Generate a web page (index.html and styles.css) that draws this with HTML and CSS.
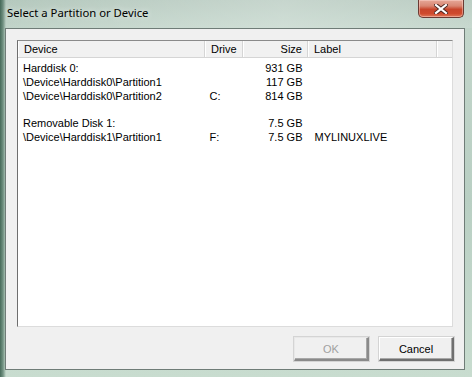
FILE: index.html
```html
<!DOCTYPE html>
<html lang="en">
<head>
  <meta charset="UTF-8">
  <title>Select a Partition or Device</title>
  <link rel="stylesheet" href="styles.css">
</head>
<body>

<div class="window">
  <div class="titlebar">
    <span class="title">Select a Partition or Device</span>
    <button class="close" title="Close">
      <svg width="14" height="10" viewBox="0 0 14 10">
        <path d="M2 1 L12 9 M12 1 L2 9" stroke="#4a2520" stroke-width="4" stroke-linecap="square" fill="none"/>
        <path d="M2 1 L12 9 M12 1 L2 9" stroke="#ffffff" stroke-width="2.2" stroke-linecap="square" fill="none"/>
      </svg>
    </button>
  </div>

  <div class="client">
    <div class="listview">
      <table class="devices">
        <thead>
          <tr>
            <th class="col-device">Device</th>
            <th class="col-drive">Drive</th>
            <th class="col-size">Size</th>
            <th class="col-label">Label</th>
            <th class="col-fill"></th>
          </tr>
        </thead>
        <tbody>
          <tr class="first"><td>Harddisk 0:</td><td></td><td class="size">931 GB</td><td></td><td></td></tr>
          <tr><td>\Device\Harddisk0\Partition1</td><td></td><td class="size">117 GB</td><td></td><td></td></tr>
          <tr><td>\Device\Harddisk0\Partition2</td><td>C:</td><td class="size">814 GB</td><td></td><td></td></tr>
          <tr class="blank"><td></td><td></td><td></td><td></td><td></td></tr>
          <tr><td>Removable Disk 1:</td><td></td><td class="size">7.5 GB</td><td></td><td></td></tr>
          <tr><td>\Device\Harddisk1\Partition1</td><td>F:</td><td class="size">7.5 GB</td><td>MYLINUXLIVE</td><td></td></tr>
        </tbody>
      </table>
    </div>

    <div class="buttons">
      <button class="btn" disabled>OK</button>
      <button class="btn">Cancel</button>
    </div>
  </div>
</div>

</body>
</html>
```

FILE: styles.css
```css
html, body {
  margin: 0;
  padding: 0;
  background: #ffffff;
}

body {
  font-family: "Liberation Sans", Arial, sans-serif;
  font-size: 11px;
  color: #000;
}

/* aero glass frame */
.window {
  width: 472px;
  height: 377px;
  box-sizing: border-box;
  padding: 0 7px 7px 5px;
  display: flex;
  flex-direction: column;
  background:
    linear-gradient(90deg, rgba(40,80,62,0.8) 0, rgba(60,100,82,0.6) 3px, rgba(160,190,175,0) 6px),
    linear-gradient(180deg, #b4c8bd 0, #c2d5ca 30px, #b9cfc3 200px, #c8dccf 377px);
}

.titlebar {
  height: 28px;
  display: flex;
  justify-content: space-between;
  align-items: flex-start;
  background: linear-gradient(90deg, rgba(255,255,255,0) 0, rgba(255,255,255,0.25) 60%, rgba(255,255,255,0.1) 100%);
  margin: 0 -7px 0 -5px;
  padding: 0 8px 0 7px;
}

.title {
  margin-top: 6px;
  font-family: "Noto Sans", "Open Sans", sans-serif;
  font-size: 11.3px;
  line-height: 14px;
  color: #000;
  text-shadow: 0 0 6px rgba(255,255,255,0.8);
}

.close {
  width: 46px;
  height: 18px;
  margin: 0;
  padding: 0;
  border: 1px solid #6b3a33;
  border-top: none;
  border-radius: 0 0 5px 5px;
  background: linear-gradient(180deg, #e6a898 0, #d98672 35%, #c8452b 55%, #cf4a2d 80%, #e0785a 100%);
  box-shadow: inset 0 0 0 1px rgba(255,220,210,0.45);
  display: flex;
  align-items: center;
  justify-content: center;
}

/* dialog client area */
.client {
  flex: 1;
  background: #f0f0f0;
  border: 1px solid #6f7c77;
  padding: 11px 10px 8px 11px;
  display: flex;
  flex-direction: column;
  gap: 10px;
}

.listview {
  flex: 1;
  background: #fff;
  border-top: 1px solid #8a8a8a;
  border-left: 1px solid #6e6e6e;
  border-right: 1px solid #dcdcdc;
  border-bottom: 1px solid #dcdcdc;
  margin-right: 1px;
  overflow: hidden;
}

.devices {
  width: 100%;
  table-layout: fixed;
  border-collapse: collapse;
  border-spacing: 0;
}

.devices th {
  height: 16px;
  padding: 0 0 0 6px;
  font-weight: normal;
  text-align: left;
  background: #f1f1f1;
  border-right: 1px solid #d5d5d5;
  border-bottom: 1px solid #d5d5d5;
  box-shadow: inset 1px 0 0 #ffffff;
  line-height: 16px;
  white-space: nowrap;
}

.devices th.col-size {
  text-align: right;
  padding: 0 5px 0 0;
}

.col-device { width: 180px; }
.col-drive  { width: 31px; }
.col-size   { width: 59px; }
.col-label  { width: 122px; }
.col-fill   { border-right: none !important; }

.devices td {
  height: 14px;
  line-height: 14px;
  padding: 0 0 0 5px;
  white-space: nowrap;
}

.devices td:nth-child(4) {
  padding-left: 7px;
}

.devices td.size {
  text-align: right;
  padding: 0 5px 0 0;
}

.devices tr.first td {
  padding-top: 3px;
}

.devices tr.blank td {
  height: 13px;
}

.buttons {
  display: flex;
  justify-content: flex-end;
  gap: 10px;
}

.btn {
  width: 75px;
  height: 24px;
  margin: 0;
  padding: 0;
  font: inherit;
  color: #000;
  background: #f0f0f0;
  border-top: 1px solid #ffffff;
  border-left: 1px solid #ffffff;
  border-right: 2px solid #6f6f6f;
  border-bottom: 2px solid #6f6f6f;
  box-shadow: inset -1px -1px 0 #a8a8a8, 0 0 0 1px #d4d4d4;
}

.btn:disabled {
  color: #a0a0a0;
  border-top-color: #e8e8e8;
  border-left-color: #e8e8e8;
  border-right-color: #8a8a8a;
  border-bottom-color: #8a8a8a;
}
```
